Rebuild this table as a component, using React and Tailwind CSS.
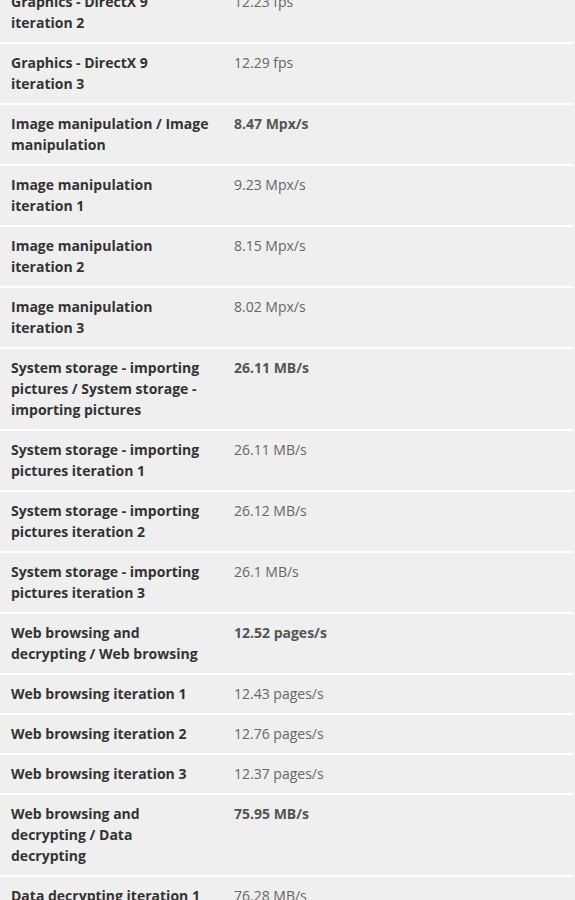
import React from "react";

const rows = [
  { label: "Graphics - DirectX 9 iteration 2", value: "12.23 fps" },
  { label: "Graphics - DirectX 9 iteration 3", value: "12.29 fps" },
  { label: "Image manipulation / Image manipulation", value: "8.47 Mpx/s", strong: true },
  { label: "Image manipulation iteration 1", value: "9.23 Mpx/s" },
  { label: "Image manipulation iteration 2", value: "8.15 Mpx/s" },
  { label: "Image manipulation iteration 3", value: "8.02 Mpx/s" },
  {
    label: "System storage - importing pictures / System storage - importing pictures",
    value: "26.11 MB/s",
    strong: true,
  },
  { label: "System storage - importing pictures iteration 1", value: "26.11 MB/s" },
  { label: "System storage - importing pictures iteration 2", value: "26.12 MB/s" },
  { label: "System storage - importing pictures iteration 3", value: "26.1 MB/s" },
  { label: "Web browsing and decrypting / Web browsing", value: "12.52 pages/s", strong: true },
  { label: "Web browsing iteration 1", value: "12.43 pages/s" },
  { label: "Web browsing iteration 2", value: "12.76 pages/s" },
  { label: "Web browsing iteration 3", value: "12.37 pages/s" },
  { label: "Web browsing and decrypting / Data decrypting", value: "75.95 MB/s", strong: true },
  { label: "Data decrypting iteration 1", value: "76.28 MB/s" },
];

export default function App() {
  return (
    <div
      className="h-[900px] overflow-hidden bg-[#efefef] text-[14px] leading-[21px]"
      style={{ fontFamily: '"Open Sans", "Liberation Sans", sans-serif' }}
    >
      <div className="-mt-[17px] w-[573px]">
        {rows.map((row, i) => (
          <div key={i} className="flex border-b-2 border-white">
            <div className="w-[223px] shrink-0 pl-[11px] pr-[12.5px] pt-2 pb-[9px] font-bold text-[#333]">
              {row.label}
            </div>
            <div
              className={
                row.strong
                  ? "flex-1 px-[11px] pt-2 pb-[9px] font-bold text-[#555]"
                  : "flex-1 px-[11px] pt-2 pb-[9px] text-[#666]"
              }
            >
              {row.value}
            </div>
          </div>
        ))}
      </div>
    </div>
  );
}
